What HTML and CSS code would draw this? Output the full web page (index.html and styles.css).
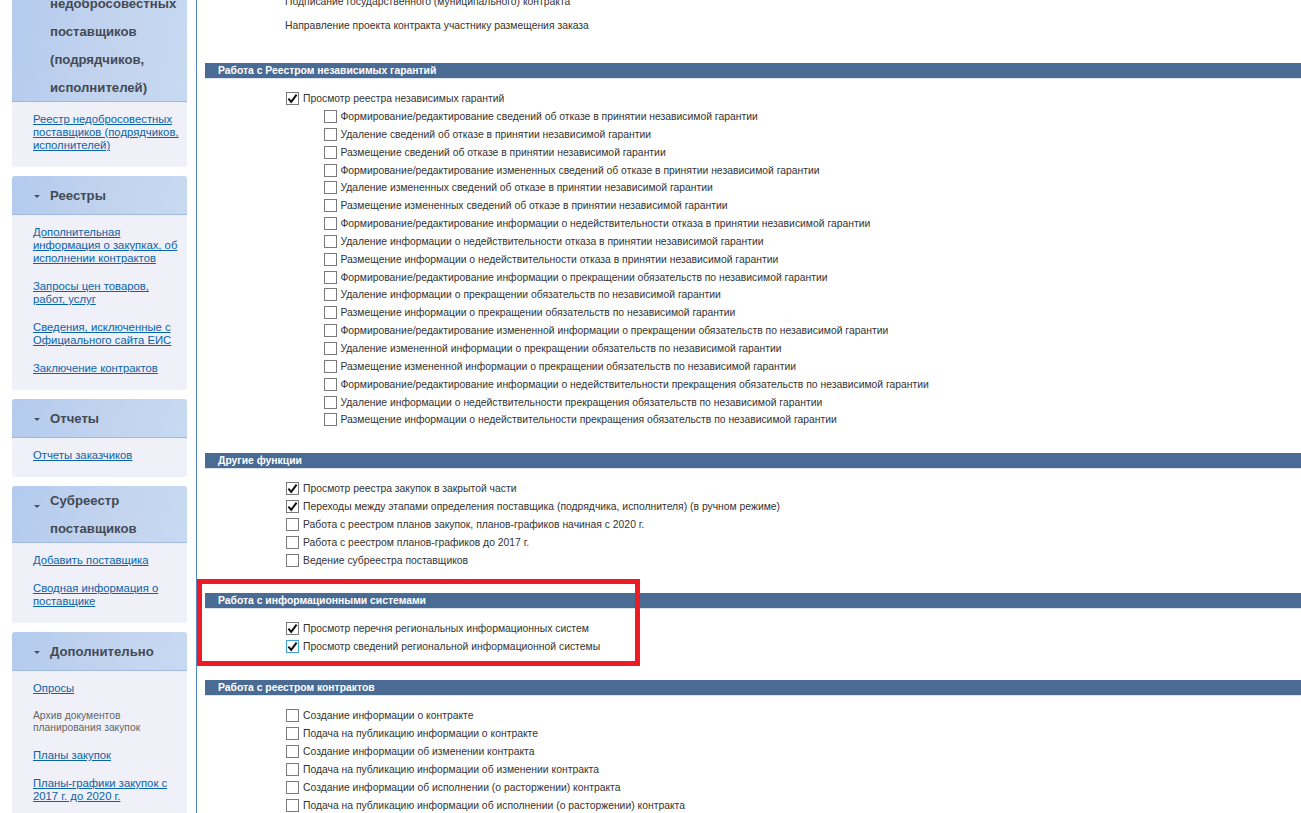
FILE: index.html
```html
<!DOCTYPE html>
<html lang="ru">
<head>
<meta charset="utf-8">
<title>Права доступа</title>
<link rel="stylesheet" href="styles.css">
</head>
<body>
<svg class="defs" width="0" height="0" aria-hidden="true"><defs><symbol id="tick" viewBox="0 0 13 13"><path d="M2.4 6.6 5.2 9.8 10.6 2.6" fill="none" stroke="#111" stroke-width="2"/></symbol></defs></svg>
<div class="page">
  <aside class="sidebar">
    <section class="panel">
      <h3 class="panel-head"><span class="arrow"></span><span class="panel-title">Реестр недобросовестных поставщиков (подрядчиков, исполнителей)</span></h3>
      <div class="panel-body">
        <a href="#">Реестр недобросовестных поставщиков (подрядчиков, исполнителей)</a>
      </div>
    </section>
    <section class="panel">
      <h3 class="panel-head"><span class="arrow"></span><span class="panel-title">Реестры</span></h3>
      <div class="panel-body">
        <a href="#">Дополнительная информация о закупках, об исполнении контрактов</a>
        <a href="#">Запросы цен товаров, работ, услуг</a>
        <a href="#">Сведения, исключенные с Официального сайта ЕИС</a>
        <a href="#">Заключение контрактов</a>
      </div>
    </section>
    <section class="panel">
      <h3 class="panel-head"><span class="arrow"></span><span class="panel-title">Отчеты</span></h3>
      <div class="panel-body">
        <a href="#">Отчеты заказчиков</a>
      </div>
    </section>
    <section class="panel">
      <h3 class="panel-head"><span class="arrow"></span><span class="panel-title">Субреестр поставщиков</span></h3>
      <div class="panel-body">
        <a href="#">Добавить поставщика</a>
        <a href="#">Сводная информация о поставщике</a>
      </div>
    </section>
    <section class="panel">
      <h3 class="panel-head"><span class="arrow"></span><span class="panel-title">Дополнительно</span></h3>
      <div class="panel-body">
        <a href="#">Опросы</a>
        <span class="muted">Архив документов планирования закупок</span>
        <a href="#">Планы закупок</a>
        <a href="#">Планы-графики закупок с 2017 г. до 2020 г.</a>
      </div>
    </section>
  </aside>
  <main class="content">
    <div class="plain-rows">
      <p>Подписание государственного (муниципального) контракта</p>
      <p>Направление проекта контракта участнику размещения заказа</p>
    </div>

    <h4 class="bar">Работа с Реестром независимых гарантий</h4>
    <ul class="rows">
      <li class="row"><span class="box"><svg><use href="#tick"/></svg></span>Просмотр реестра независимых гарантий</li>
      <li class="row sub"><span class="box"></span>Формирование/редактирование сведений об отказе в принятии независимой гарантии</li>
      <li class="row sub"><span class="box"></span>Удаление сведений об отказе в принятии независимой гарантии</li>
      <li class="row sub"><span class="box"></span>Размещение сведений об отказе в принятии независимой гарантии</li>
      <li class="row sub"><span class="box"></span>Формирование/редактирование измененных сведений об отказе в принятии независимой гарантии</li>
      <li class="row sub"><span class="box"></span>Удаление измененных сведений об отказе в принятии независимой гарантии</li>
      <li class="row sub"><span class="box"></span>Размещение измененных сведений об отказе в принятии независимой гарантии</li>
      <li class="row sub"><span class="box"></span>Формирование/редактирование информации о недействительности отказа в принятии независимой гарантии</li>
      <li class="row sub"><span class="box"></span>Удаление информации о недействительности отказа в принятии независимой гарантии</li>
      <li class="row sub"><span class="box"></span>Размещение информации о недействительности отказа в принятии независимой гарантии</li>
      <li class="row sub"><span class="box"></span>Формирование/редактирование информации о прекращении обязательств по независимой гарантии</li>
      <li class="row sub"><span class="box"></span>Удаление информации о прекращении обязательств по независимой гарантии</li>
      <li class="row sub"><span class="box"></span>Размещение информации о прекращении обязательств по независимой гарантии</li>
      <li class="row sub"><span class="box"></span>Формирование/редактирование измененной информации о прекращении обязательств по независимой гарантии</li>
      <li class="row sub"><span class="box"></span>Удаление измененной информации о прекращении обязательств по независимой гарантии</li>
      <li class="row sub"><span class="box"></span>Размещение измененной информации о прекращении обязательств по независимой гарантии</li>
      <li class="row sub"><span class="box"></span>Формирование/редактирование информации о недействительности прекращения обязательств по независимой гарантии</li>
      <li class="row sub"><span class="box"></span>Удаление информации о недействительности прекращения обязательств по независимой гарантии</li>
      <li class="row sub"><span class="box"></span>Размещение информации о недействительности прекращения обязательств по независимой гарантии</li>
    </ul>

    <h4 class="bar">Другие функции</h4>
    <ul class="rows">
      <li class="row"><span class="box"><svg><use href="#tick"/></svg></span>Просмотр реестра закупок в закрытой части</li>
      <li class="row"><span class="box"><svg><use href="#tick"/></svg></span>Переходы между этапами определения поставщика (подрядчика, исполнителя) (в ручном режиме)</li>
      <li class="row"><span class="box"></span>Работа с реестром планов закупок, планов-графиков начиная с 2020 г.</li>
      <li class="row"><span class="box"></span>Работа с реестром планов-графиков до 2017 г.</li>
      <li class="row"><span class="box"></span>Ведение субреестра поставщиков</li>
    </ul>

    <h4 class="bar">Работа с информационными системами</h4>
    <ul class="rows">
      <li class="row"><span class="box"><svg><use href="#tick"/></svg></span>Просмотр перечня региональных информационных систем</li>
      <li class="row"><span class="box focus"><svg><use href="#tick"/></svg></span>Просмотр сведений региональной информационной системы</li>
    </ul>

    <h4 class="bar">Работа с реестром контрактов</h4>
    <ul class="rows">
      <li class="row"><span class="box"></span>Создание информации о контракте</li>
      <li class="row"><span class="box"></span>Подача на публикацию информации о контракте</li>
      <li class="row"><span class="box"></span>Создание информации об изменении контракта</li>
      <li class="row"><span class="box"></span>Подача на публикацию информации об изменении контракта</li>
      <li class="row"><span class="box"></span>Создание информации об исполнении (о расторжении) контракта</li>
      <li class="row"><span class="box"></span>Подача на публикацию информации об исполнении (о расторжении) контракта</li>
    </ul>
  </main>
  <div class="highlight"></div>
</div>
</body>
</html>
```
FILE: styles.css
```css
html, body {
  margin: 0;
  padding: 0;
  height: 100%;
  overflow: hidden;
  background: #fff;
}

body {
  font-family: "Liberation Sans", Arial, sans-serif;
  color: #333;
}

.defs {
  position: absolute;
}

.page {
  position: relative;
  display: flex;
  height: 813px;
  overflow: hidden;
}

/* Sidebar */
.sidebar {
  flex: 0 0 184px;
  display: flex;
  flex-direction: column;
  gap: 9px;
  margin-top: -39px;
  padding-left: 12px;
  box-sizing: content-box;
}

.panel {
  flex: none;
  width: 175px;
  background: #eff0f8;
  border-radius: 3px;
  overflow: hidden;
}

.panel-head {
  display: flex;
  min-height: 38px;
  margin: 0;
  padding-left: 22px;
  background: linear-gradient(100deg, #b3cbee 0%, #c2d3ee 55%, #c7daf2 100%);
  border-bottom: 1px solid #9fb9de;
}

.arrow {
  flex: none;
  align-self: flex-start;
  width: 0;
  height: 0;
  margin: 19px 10px 0 0;
  border-left: 3px solid transparent;
  border-right: 3px solid transparent;
  border-top: 3px solid #4a5058;
}

.panel-title {
  align-self: center;
  margin-bottom: -1px;
  padding-top: 1px;
  font-size: 13.15px;
  font-weight: bold;
  line-height: 28px;
  color: #434a54;
}

.panel-body {
  display: flex;
  flex-direction: column;
  align-items: flex-start;
  gap: 15px;
  padding: 11px 6px 15px 21px;
  font-size: 11.3px;
  line-height: 13px;
}

.panel-body a {
  color: #0b63a8;
  text-decoration: underline;
}

.muted {
  font-size: 10.3px;
  line-height: 12px;
  color: #666;
}

/* Main content */
.content {
  flex: 1;
  min-width: 0;
  padding-left: 8px;
  border-left: 1px solid #4f86c6;
  font-size: 10.36px;
}

.plain-rows {
  display: flex;
  flex-direction: column;
  gap: 12px;
  margin-top: -4px;
  padding: 0 0 7.1px 80px;
}

.plain-rows p {
  margin: 0;
  line-height: 12px;
  color: #333;
}

.bar {
  margin: 23.9px 0 0;
  padding-left: 13px;
  height: 15px;
  background: #4a6b94;
  border-bottom: 1px solid #dfe6ef;
  font-size: 10.36px;
  font-weight: bold;
  line-height: 15px;
  color: #fff;
}

.rows {
  list-style: none;
  margin: 10.6px 0 0;
  padding: 0 0 0 81px;
}

.row {
  display: flex;
  align-items: center;
  height: 18px;
  white-space: nowrap;
}

.row.sub {
  height: 17.85px;
  padding-left: 38px;
}

.box {
  flex: none;
  display: block;
  box-sizing: border-box;
  width: 13px;
  height: 13px;
  margin-right: 4px;
  background: #fff;
  border: 1px solid #7a7a7a;
}

.row.sub .box {
  margin-right: 3.4px;
}

.box svg {
  display: block;
  width: 13px;
  height: 13px;
  margin: -1px;
}

.box.focus {
  border-color: #3f9fe0;
}

/* Red annotation drawn over the screenshot */
.highlight {
  position: absolute;
  left: 197px;
  top: 579px;
  width: 443px;
  height: 87px;
  box-sizing: border-box;
  border: 5px solid #ed1c24;
}
```
